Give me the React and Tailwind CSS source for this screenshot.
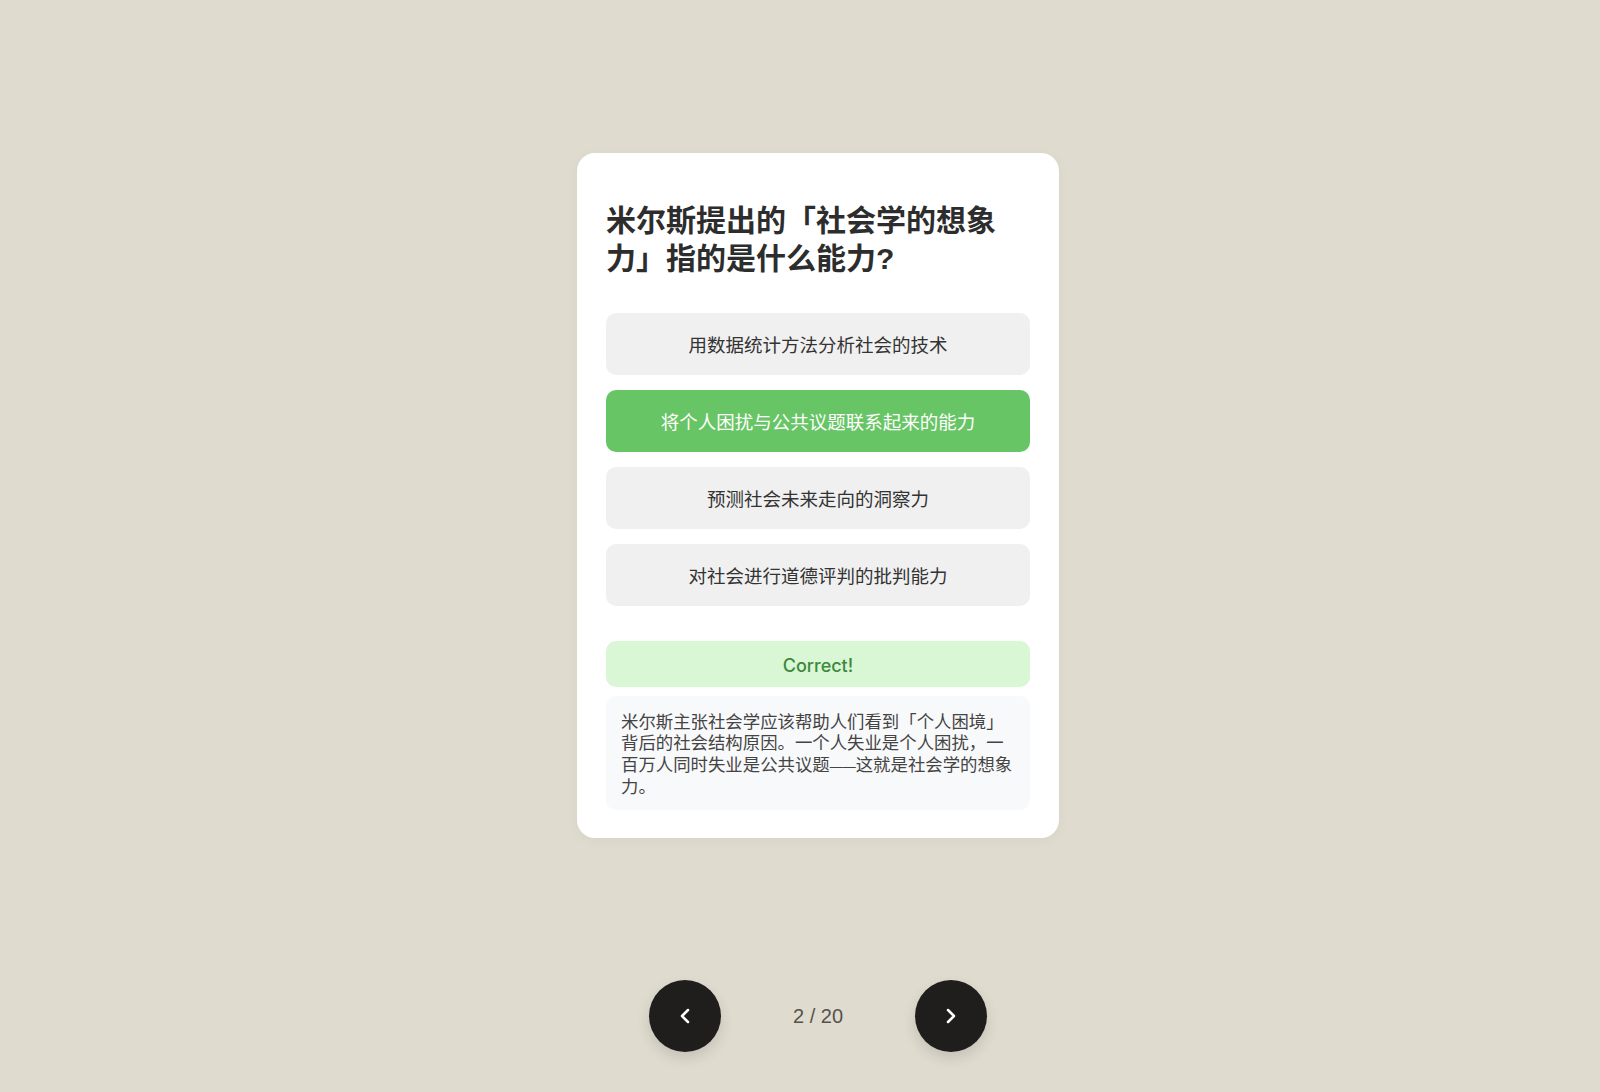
import React, { useState } from "react";
import { ChevronLeft, ChevronRight } from "lucide-react";

const OPTIONS = [
  "用数据统计方法分析社会的技术",
  "将个人困扰与公共议题联系起来的能力",
  "预测社会未来走向的洞察力",
  "对社会进行道德评判的批判能力",
];

const CORRECT = 1;

const App = () => {
  const [picked] = useState(1);

  return (
    <div className="flex min-h-screen flex-col items-center bg-[#dfdbcf] pl-[36px] font-['Liberation_Sans','Noto_Sans_CJK_SC',sans-serif]">
      <section className="mt-[153px] w-[482px] rounded-[18px] bg-white px-[29px] pb-[28px] pt-[49px] shadow-[0_2px_14px_rgba(0,0,0,0.04)]">
        <h1 className="mb-[36px] text-[30px] font-bold leading-[37.5px] text-[#2d2d2d]">
          米尔斯提出的「社会学的想象力」指的是什么能力?
        </h1>

        <div className="flex flex-col gap-[15px]">
          {OPTIONS.map((text, i) => (
            <button
              key={text}
              className={`flex h-[62px] w-full items-center justify-center rounded-[10px] pt-[3px] text-[18.5px] font-normal ${
                i === picked && picked === CORRECT ? "bg-[#67c565] text-white" : "bg-[#f0f0f0] text-[#333]"
              }`}
            >
              {text}
            </button>
          ))}
        </div>

        <div className="mt-[35px] flex h-[46px] items-center justify-center rounded-[10px] bg-[#d9f6d5] pt-[2px] font-['Inter',sans-serif] text-[18px] font-medium text-[#3c8a3c]">
          Correct!
        </div>

        <p className="mt-[9px] rounded-[10px] bg-[#f8f9fa] pb-3 pl-[15px] pr-[14px] pt-4 text-[17.4px] leading-[21.3px] text-[#444]">
          米尔斯主张社会学应该帮助人们看到「个人困境」
          <br />
          背后的社会结构原因。一个人失业是个人困扰，一
          <br />
          百万人同时失业是公共议题<span className="text-[13px]">——</span>这就是社会学的想象
          <br />
          力。
        </p>
      </section>

      <nav className="mb-[40px] mt-auto flex items-center gap-[72px]">
        <button
          aria-label="上一题"
          className="flex h-[72px] w-[72px] items-center justify-center rounded-full bg-[#1f1e1c] text-white shadow-[0_6px_14px_rgba(0,0,0,0.12)]"
        >
          <ChevronLeft size={24} strokeWidth={2.5} />
        </button>
        <span className="whitespace-nowrap text-[20px] text-[#57534c]">2 / 20</span>
        <button
          aria-label="下一题"
          className="flex h-[72px] w-[72px] items-center justify-center rounded-full bg-[#1f1e1c] text-white shadow-[0_6px_14px_rgba(0,0,0,0.12)]"
        >
          <ChevronRight size={24} strokeWidth={2.5} />
        </button>
      </nav>
    </div>
  );
};

export default App;
